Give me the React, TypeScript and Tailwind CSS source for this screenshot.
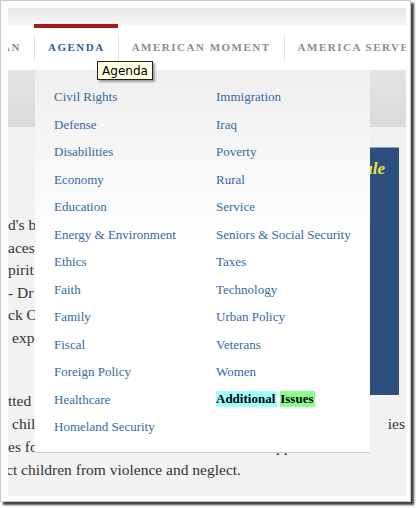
import React from 'react';

const leftTopics = [
  'Civil Rights',
  'Defense',
  'Disabilities',
  'Economy',
  'Education',
  'Energy & Environment',
  'Ethics',
  'Faith',
  'Family',
  'Fiscal',
  'Foreign Policy',
  'Healthcare',
  'Homeland Security',
];

const rightTopics = [
  'Immigration',
  'Iraq',
  'Poverty',
  'Rural',
  'Service',
  'Seniors & Social Security',
  'Taxes',
  'Technology',
  'Urban Policy',
  'Veterans',
  'Women',
];

// page copy that peeks out to the left of the open menu
const leftCopy = ["d's best and brightest", 'aces of every kind', 'pirit of service', '- Dr King', 'ck Obama'];

const Separator = () => <div className="w-px h-[26px] bg-[#e0e0e0] flex-shrink-0" />;

const Nav = () => (
  <div className="h-[45px] bg-white flex items-center flex-shrink-0 text-[11px] font-bold tracking-[1.5px] uppercase">
    <div className="w-[26px] h-full flex items-center justify-end overflow-hidden pr-[13px] flex-shrink-0">
      <span className="whitespace-nowrap flex-shrink-0 text-[#8a8a8a]">Plan</span>
    </div>
    <Separator />
    <div className="relative h-full flex items-center px-[13px] flex-shrink-0 text-[#2f5f90]">
      <div className="absolute left-[-1px] right-0 top-[-1px] h-[4px] bg-[#a41818]" />
      Agenda
    </div>
    <Separator />
    <div className="h-full flex items-center px-[13px] flex-shrink-0 text-[#8c8c8c] whitespace-nowrap">
      American Moment
    </div>
    <Separator />
    <div className="h-full flex items-center px-[13px] flex-shrink-0 text-[#8c8c8c] whitespace-nowrap">
      America Serves
    </div>
  </div>
);

const Body = () => (
  <div className="flex-1 flex flex-col text-[15.5px] text-[#333] leading-[22.6px]">
    <div className="h-[57px] bg-gradient-to-b from-[#e4e4e4] to-[#dadada] flex-shrink-0" />
    <div className="flex">
      <div className="flex-1 min-w-0 pt-[87px] whitespace-nowrap">
        <div className="w-[27px] overflow-hidden">
          {leftCopy.map(line => (
            <div key={line}>{line}</div>
          ))}
          <div className="pl-[4px]">experience</div>
        </div>
      </div>
      <div className="w-[150px] h-[248px] mt-[20px] mr-[7px] bg-[#2d4f7e] border-t border-[#8fa3bf] flex-shrink-0 pr-[14px] pt-[10px] text-right">
        <span className="text-[17px] font-bold italic text-[#efe23a] whitespace-nowrap">Schedule</span>
      </div>
    </div>
    <div className="-mt-[6px] leading-[23px] whitespace-nowrap">
      <div className="w-[27px] overflow-hidden">tted</div>
      <div className="flex justify-between pr-[1px]">
        <span className="w-[27px] overflow-hidden pl-[4px]">children</span>
        <span>ies</span>
      </div>
      <div className="flex">
        <span className="w-[27px] overflow-hidden">es for</span>
        <span className="ml-[241px]">pp</span>
      </div>
      <div className="-ml-[2px]">ct children from violence and neglect.</div>
    </div>
  </div>
);

const Dropdown = () => (
  <div className="absolute left-[27px] top-[62px] w-[335px] h-[383px] bg-gradient-to-b from-[#efefef] via-white via-[45%] to-white border-b border-[#cfcfcf] flex pt-[13px] text-[13px] text-[#35699f] leading-[27.5px]">
    <div className="w-[181px] pl-[19px] flex flex-col flex-shrink-0">
      {leftTopics.map(t => (
        <div key={t} className="h-[27.5px] whitespace-nowrap">{t}</div>
      ))}
    </div>
    <div className="flex flex-col">
      {rightTopics.map(t => (
        <div key={t} className="h-[27.5px] whitespace-nowrap">{t}</div>
      ))}
      <div className="h-[27.5px] flex items-center font-bold text-black whitespace-nowrap">
        <span className="inline-block h-[16px] leading-[16px] bg-[#9dffff] pr-[2px]">Additional</span>
        <span className="inline-block h-[16px] leading-[16px] bg-[#8dff8d] ml-[3px] pr-[1px]">Issues</span>
      </div>
    </div>
  </div>
);

const Tooltip = () => (
  <div className="absolute left-[89px] top-[53px] w-[56px] h-[19px] bg-[#ffffe1] border border-[#1e1e1e] shadow-[2px_2px_2px_rgba(0,0,0,0.35)] flex items-center justify-center text-[12px] text-black font-['DejaVu_Sans',sans-serif] leading-none">
    Agenda
  </div>
);

export default function App() {
  return (
    <div className="w-[420px] h-[508px] bg-white">
      <div className="w-[411px] h-[502px] border border-[#c9c9c9] bg-white pl-[7px] pt-[7px] pr-[4px] pb-[5px] shadow-[3px_3px_2px_rgba(0,0,0,0.75)]">
        <div className="relative w-full h-full overflow-hidden bg-[#f2f2f2] flex flex-col font-['Liberation_Serif',serif]">
          <div className="h-[17px] bg-gradient-to-b from-[#e8e8e8] to-[#f6f6f6] flex-shrink-0" />
          <Nav />
          <Body />
          <Dropdown />
          <Tooltip />
        </div>
      </div>
    </div>
  );
}
